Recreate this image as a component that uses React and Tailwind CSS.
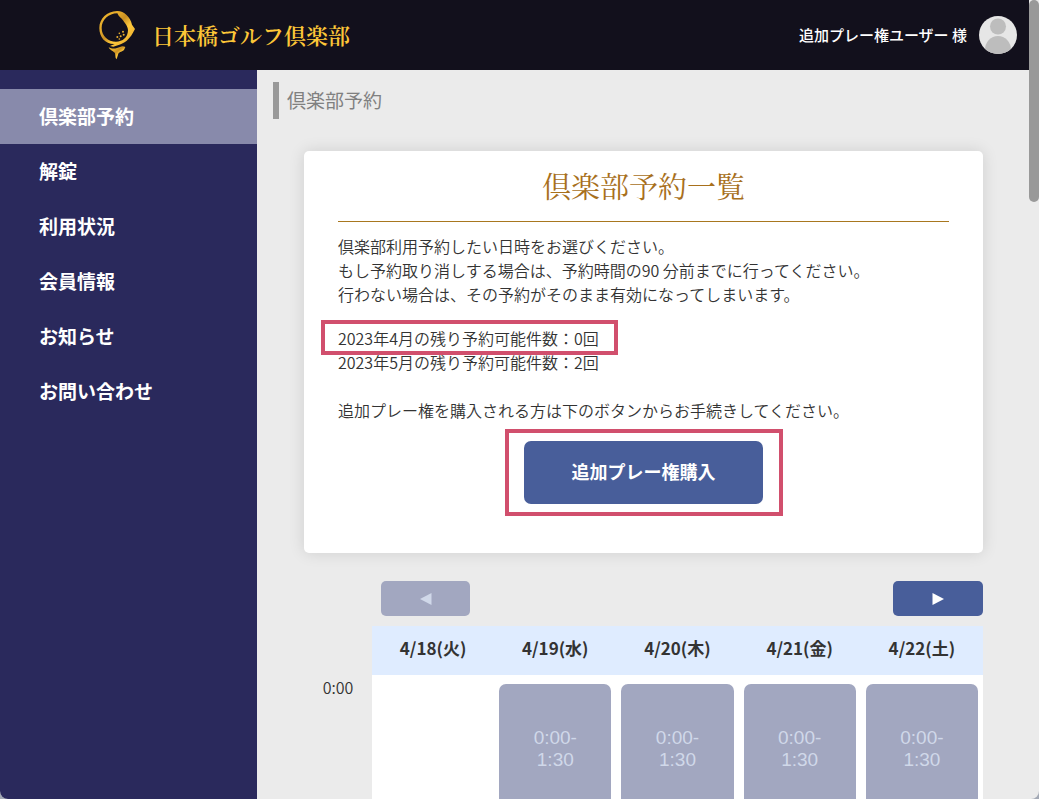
import React from 'react'

const menuItems = ['倶楽部予約', '解錠', '利用状況', '会員情報', 'お知らせ', 'お問い合わせ']

const days = [
  { label: '4/18(火)', slot: null },
  { label: '4/19(水)', slot: ['0:00-', '1:30'] },
  { label: '4/20(木)', slot: ['0:00-', '1:30'] },
  { label: '4/21(金)', slot: ['0:00-', '1:30'] },
  { label: '4/22(土)', slot: ['0:00-', '1:30'] },
]

function Logo() {
  return (
    <svg viewBox="18 18 114 150" className="h-[50px] w-[38px]" aria-hidden="true">
      <defs>
        <linearGradient id="gold" x1="0" y1="0" x2="1" y2="1">
          <stop offset="0" stopColor="#f0b92f" />
          <stop offset="0.3" stopColor="#e3a92a" />
          <stop offset="0.45" stopColor="#c98f22" />
          <stop offset="0.62" stopColor="#ffc93c" />
          <stop offset="1" stopColor="#e0a127" />
        </linearGradient>
      </defs>
      <path
        fill="url(#gold)"
        fillRule="evenodd"
        d="M75 21C95 20 115 38 120 62L129 75L122 88C112 106 98 118 82 122L64 128L54 126L68 120C40 121 22 100 22 72C22 44 45 22 75 21ZM76 28C50 28 29 48 29 72C29 96 48 113 72 113C92 113 108 100 108 78C107 65 99 58 94 50C88 42 80 38 76 28Z"
      />
      <g fill="#e9b02f">
        <circle cx="82" cy="88" r="2.500" />
        <circle cx="93" cy="83" r="3" />
        <circle cx="76" cy="99" r="3" />
        <circle cx="86" cy="97" r="3" />
        <circle cx="95" cy="92" r="3" />
        <circle cx="82" cy="105" r="2.500" />
      </g>
      <path
        fill="url(#gold)"
        d="M50 130C62 137 75 133 84 129C90 126 95 126 100 129L96 138C88 144 80 144 78 152L74 166L71 162L69 148C66 142 54 140 50 130Z"
      />
    </svg>
  )
}

function Avatar() {
  return (
    <svg viewBox="0 0 38 38" className="size-[38px]" role="img" aria-label="ユーザー">
      <clipPath id="avatar">
        <circle cx="19" cy="19" r="19" />
      </clipPath>
      <g clipPath="url(#avatar)">
        <rect width="38" height="38" fill="#e6e6e6" />
        <circle cx="19" cy="10.500" r="8" fill="#bdbdbd" />
        <ellipse cx="19" cy="34" rx="13" ry="14" fill="#bdbdbd" />
      </g>
    </svg>
  )
}

function Header() {
  return (
    <header className="flex h-[70px] shrink-0 items-center justify-between bg-[#12101c] pr-3 pl-[98px]">
      <a href="#" className="flex items-center gap-4">
        <Logo />
        <span className="font-['Noto_Serif_CJK_JP','Noto_Serif_JP','Noto_Sans_CJK_JP',serif] text-[22px] leading-8 font-semibold text-[#fcc638]">
          日本橋ゴルフ倶楽部
        </span>
      </a>
      <div className="flex items-center gap-3">
        <span className="text-[15px] font-medium text-white">追加プレー権ユーザー 様</span>
        <Avatar />
      </div>
    </header>
  )
}

function Sidebar() {
  return (
    <nav className="w-[257px] shrink-0 bg-[#2a295c] pt-[19px]">
      <ul>
        {menuItems.map((item, i) => (
          <li key={item}>
            <a
              href="#"
              className={
                i === 0
                  ? 'flex h-[55px] items-center bg-[#888aab] pb-[2px] pl-[39px] text-[19px] font-bold text-white'
                  : 'flex h-[55px] items-center pb-[2px] pl-[39px] text-[19px] font-bold text-white'
              }
            >
              {item}
            </a>
          </li>
        ))}
      </ul>
    </nav>
  )
}

function InfoCard() {
  return (
    <section className="rounded-[5px] bg-white px-[34px] pt-[15px] pb-[49px] shadow-[0_0_16px_rgba(0,0,0,0.12)]">
      <h2 className="border-b border-[#a8771f] pb-[15px] text-center font-['Noto_Serif_CJK_JP','Noto_Serif_JP','Noto_Sans_CJK_JP',serif] text-[29px] leading-10 font-normal text-[#a8701c]">
        倶楽部予約一覧
      </h2>
      <p className="mt-3">
        倶楽部利用予約したい日時をお選びください。
        <br />
        もし予約取り消しする場合は、予約時間の90 分前までに行ってください。
        <br />
        行わない場合は、その予約がそのまま有効になってしまいます。
      </p>
      <div className="mt-5">
        <p className="relative w-fit">
          2023年4月の残り予約可能件数：0回
          <span className="pointer-events-none absolute -top-[6px] -right-[19px] -bottom-[5px] -left-[17px] border-4 border-[#d14f6d]" />
        </p>
        <p>2023年5月の残り予約可能件数：2回</p>
      </div>
      <p className="mt-6">追加プレー権を購入される方は下のボタンからお手続きしてください。</p>
      <div className="relative mx-auto mt-[19px] w-fit">
        <button
          type="button"
          className="block h-[63px] w-[239px] rounded-[7px] bg-[#485e9a] pb-[3px] text-lg font-bold text-white"
        >
          追加プレー権購入
        </button>
        <span className="pointer-events-none absolute -inset-y-3 -right-5 -left-[19px] border-4 border-[#d14f6d]" />
      </div>
    </section>
  )
}

function Schedule() {
  return (
    <section className="mt-7">
      <div className="flex justify-between pl-[77px]">
        <button
          type="button"
          disabled
          aria-label="前へ"
          className="flex h-[35px] w-[89px] items-center justify-center rounded-[5px] bg-[#a2a7c0]"
        >
          <svg viewBox="0 0 12 12" className="size-3 fill-[#d0d8e9]">
            <path d="M11.500 0V12L0 6Z" />
          </svg>
        </button>
        <button
          type="button"
          aria-label="次へ"
          className="flex h-[35px] w-[90px] items-center justify-center rounded-[5px] bg-[#485e9a]"
        >
          <svg viewBox="0 0 12 12" className="size-3 fill-white">
            <path d="M.5 0V12L12 6Z" />
          </svg>
        </button>
      </div>
      <table className="mt-[10px] w-full table-fixed border-collapse">
        <thead>
          <tr className="h-[49px]">
            <td className="w-[68px]" />
            {days.map((day) => (
              <th key={day.label} scope="col" className="bg-[#dfecff] pb-[5px] text-[17px] font-bold">
                {day.label}
              </th>
            ))}
          </tr>
        </thead>
        <tbody>
          <tr>
            <th scope="row" className="align-top font-[350]">0:00</th>
            {days.map((day) => (
              <td key={day.label} className="bg-white px-[5px] pt-[9px] align-top">
                {day.slot && (
                  <button
                    type="button"
                    disabled
                    className="block h-[130px] w-full rounded-[7px] bg-[#a2a7c0] font-['Liberation_Sans',sans-serif] text-[19px] leading-[22px] text-[#d0d8e9]"
                  >
                    {day.slot[0]}
                    <br />
                    {day.slot[1]}
                  </button>
                )}
              </td>
            ))}
          </tr>
        </tbody>
      </table>
    </section>
  )
}

export default function App() {
  return (
    <div className="bg-[#a3a9b5]">
      <div className="flex h-screen overflow-hidden rounded-b-lg bg-[#ebebeb] font-['Noto_Sans_CJK_JP',sans-serif] text-base leading-6 font-[350] text-[#333]">
        <div className="flex min-w-0 flex-1 flex-col">
          <Header />
          <div className="flex min-h-0 flex-1">
            <Sidebar />
            <main className="min-w-0 flex-1 overflow-hidden pt-3">
              <h1 className="ml-4 flex h-[37px] items-center border-l-6 border-[#999] pb-[2px] pl-2 text-[19px] font-normal text-[#808080]">
                倶楽部予約
              </h1>
              <div className="mt-8 mr-[46px] ml-[47px]">
                <InfoCard />
                <Schedule />
              </div>
            </main>
          </div>
        </div>
        <div className="w-[10px] shrink-0" aria-hidden="true">
          <div className="h-[202px] rounded-full bg-[#999]" />
        </div>
      </div>
    </div>
  )
}
